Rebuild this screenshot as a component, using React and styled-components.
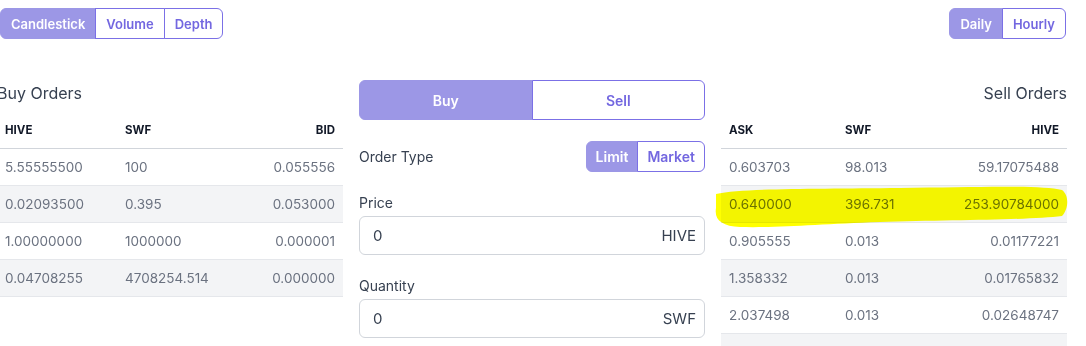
import React from "react";
import styled, { createGlobalStyle } from "styled-components";

const Global = createGlobalStyle`
  html, body { margin: 0; padding: 0; background: #fff; overflow: hidden; }
  body { font-family: Inter, "Noto Sans", sans-serif; width: 1086px; height: 346px; }
  * { box-sizing: border-box; }
`;

const Page = styled.div`
  position: relative;
  width: 1086px;
  height: 346px;
  overflow: hidden;
`;

const TopBar = styled.div`
  display: flex;
  justify-content: space-between;
  padding: 8px 20px 0 0;
`;

const Group = styled.div`
  display: flex;
  height: ${(p) => p.$h || 31}px;
  width: ${(p) => (p.$full ? "100%" : "auto")};
`;

const Seg = styled.button`
  font-family: Inter, sans-serif;
  font-size: ${(p) => p.$fs || 13}px;
  font-weight: 600;
  padding: 0 ${(p) => p.$px ?? 10}px;
  flex: ${(p) => (p.$grow ? 1 : "none")};
  border: 1px solid #7b70e6;
  margin-left: -1px;
  background: ${(p) => (p.$active ? "#9c97e6" : "#fff")};
  color: ${(p) => (p.$active ? "#fff" : "#7367e0")};
  cursor: pointer;
  &:first-child { margin-left: 0; border-radius: 6px 0 0 6px; }
  &:last-child { border-radius: 0 6px 6px 0; }
  ${(p) => p.$active && "border-color: #9c97e6;"}
`;

const Grid = styled.div`
  display: grid;
  grid-template-columns: 346px 346px 346px;
  column-gap: 16px;
  margin-left: -3px;
  margin-top: 41px;
`;

const Panel = styled.div`
  display: flex;
  flex-direction: column;
`;

const Heading = styled.div`
  font-size: 16px;
  color: #374151;
  height: 20px;
  line-height: 20px;
  margin-top: 3px;
  text-align: ${(p) => p.$align || "left"};
`;

const Table = styled.table`
  width: 100%;
  border-collapse: collapse;
  margin-top: 9px;
`;

const Th = styled.th`
  font-size: 11.5px;
  font-weight: 700;
  color: #111827;
  text-align: ${(p) => (p.$right ? "right" : "left")};
  height: 36px;
  padding: 0 8px;
  border-bottom: 1px solid #d1d5db;
  width: ${(p) => p.$w || "auto"};
`;

const Tr = styled.tr`
  background: ${(p) => (p.$alt ? "#f3f4f6" : "#fff")};
  border-bottom: 1px solid #e5e7eb;
`;

const Td = styled.td`
  font-size: 13.5px;
  color: #6b7280;
  height: 37px;
  padding: 0 8px;
  text-align: ${(p) => (p.$right ? "right" : "left")};
`;

const Form = styled.div`
  display: flex;
  flex-direction: column;
`;

const Row = styled.div`
  display: flex;
  align-items: center;
  justify-content: space-between;
  margin-top: 21px;
`;

const Label = styled.div`
  font-size: 14px;
  line-height: 17px;
  color: #374151;
  margin-top: ${(p) => p.$mt || 0}px;
  margin-bottom: ${(p) => p.$mb ?? 5}px;
`;

const InputBox = styled.div`
  display: flex;
  align-items: center;
  justify-content: space-between;
  height: 39px;
  border: 1px solid #d1d5db;
  border-radius: 6px;
  padding: 0 8px 0 13px;
  font-size: 15px;
  color: #374151;
`;

const Unit = styled.span`
  font-size: 15px;
  color: #374151;
`;

const Highlight = styled.svg`
  position: absolute;
  left: 0;
  top: 0;
  pointer-events: none;
  mix-blend-mode: multiply;
`;

const buys = [
  ["5.55555500", "100", "0.055556"],
  ["0.02093500", "0.395", "0.053000"],
  ["1.00000000", "1000000", "0.000001"],
  ["0.04708255", "4708254.514", "0.000000"],
];

const sells = [
  ["0.603703", "98.013", "59.17075488"],
  ["0.640000", "396.731", "253.90784000"],
  ["0.905555", "0.013", "0.01177221"],
  ["1.358332", "0.013", "0.01765832"],
  ["2.037498", "0.013", "0.02648747"],
  ["", "", ""],
];

export default function App() {
  return (
    <Page>
      <Global />
      <TopBar>
        <Group>
          <Seg $active>Candlestick</Seg>
          <Seg>Volume</Seg>
          <Seg>Depth</Seg>
        </Group>
        <Group>
          <Seg $active>Daily</Seg>
          <Seg>Hourly</Seg>
        </Group>
      </TopBar>
      <Grid>
        <Panel>
          <Heading>Buy Orders</Heading>
          <Table>
            <thead>
              <tr>
                <Th $w="120px">HIVE</Th>
                <Th>SWF</Th>
                <Th $right>BID</Th>
              </tr>
            </thead>
            <tbody>
              {buys.map((r, i) => (
                <Tr key={i} $alt={i % 2 === 1}>
                  <Td>{r[0]}</Td>
                  <Td>{r[1]}</Td>
                  <Td $right>{r[2]}</Td>
                </Tr>
              ))}
            </tbody>
          </Table>
        </Panel>
        <Panel>
          <Form>
            <Group $h={40} $full>
              <Seg $active $grow $fs={14}>Buy</Seg>
              <Seg $grow $fs={14}>Sell</Seg>
            </Group>
            <Row>
              <Label $mb={0}>Order Type</Label>
              <Group>
                <Seg $active $px={9} $fs={14}>Limit</Seg>
                <Seg $px={9} $fs={14}>Market</Seg>
              </Group>
            </Row>
            <Label $mt={22}>Price</Label>
            <InputBox>
              <span>0</span>
              <Unit>HIVE</Unit>
            </InputBox>
            <Label $mt={22}>Quantity</Label>
            <InputBox>
              <span>0</span>
              <Unit>SWF</Unit>
            </InputBox>
          </Form>
        </Panel>
        <Panel>
          <Heading $align="right">Sell Orders</Heading>
          <Table>
            <thead>
              <tr>
                <Th $w="116px">ASK</Th>
                <Th>SWF</Th>
                <Th $right>HIVE</Th>
              </tr>
            </thead>
            <tbody>
              {sells.map((r, i) => (
                <Tr key={i} $alt={i % 2 === 1}>
                  <Td>{r[0]}</Td>
                  <Td>{r[1]}</Td>
                  <Td $right>{r[2]}</Td>
                </Tr>
              ))}
            </tbody>
          </Table>
        </Panel>
      </Grid>
      <Highlight width="1086" height="346" viewBox="0 0 1086 346">
        <path
          d="M716 194 C 745 188, 820 189, 900 188 C 980 187, 1040 185, 1062 190 C 1070 196, 1068 210, 1062 216 C 1030 220, 950 220, 880 222 C 820 224, 780 228, 740 227 C 722 226, 714 220, 716 208 Z"
          fill="#ffff00"
        />
      </Highlight>
    </Page>
  );
}
